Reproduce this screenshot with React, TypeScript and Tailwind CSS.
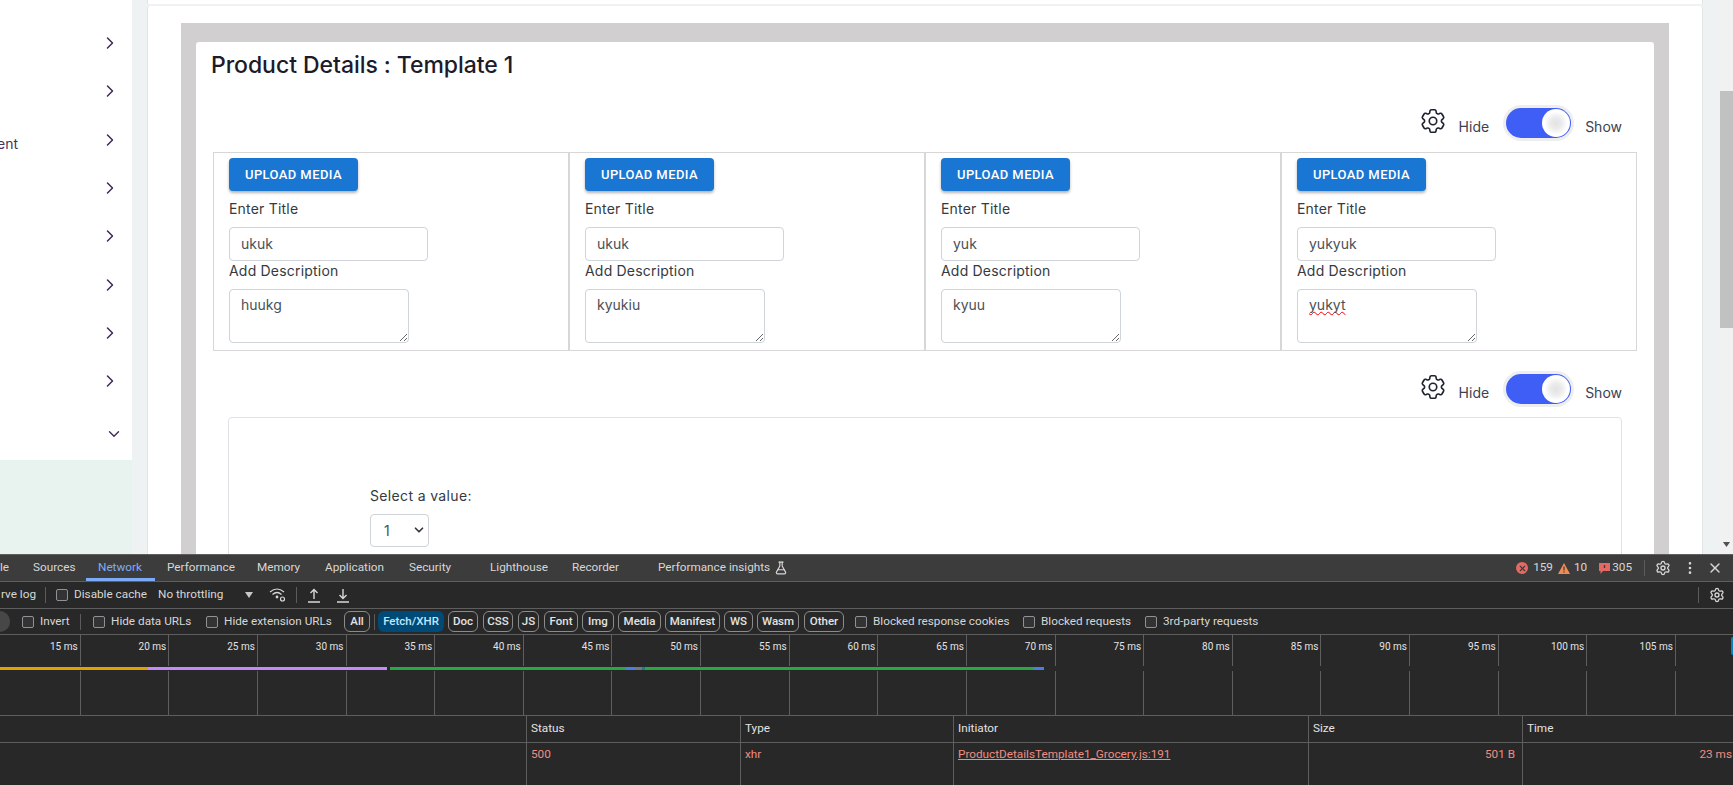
import React from 'react';
import { ChevronRight, ChevronDown, Settings, X, MoreVertical, FlaskConical } from 'lucide-react';
import { HiOutlineCog6Tooth } from 'react-icons/hi2';

const sideRows = ['', '', 'ent', '', '', '', '', ''];

const cards = [
  { title: 'ukuk', desc: 'huukg' },
  { title: 'ukuk', desc: 'kyukiu' },
  { title: 'yuk', desc: 'kyuu' },
  { title: 'yukyuk', desc: 'yukyt', spell: true },
];

const tabs = [
  { label: 'le', cls: 'w-[21px] pr-3 text-right' },
  { label: 'Sources', cls: 'w-[65px] pl-3' },
  { label: 'Network', cls: 'w-[69px] pl-3 text-[#7cacf8] border-b-[3px] border-[#7cacf8] pt-[3px]' },
  { label: 'Performance', cls: 'w-[90px] pl-3' },
  { label: 'Memory', cls: 'w-[68px] pl-3' },
  { label: 'Application', cls: 'w-[84px] pl-3' },
  { label: 'Security', cls: 'w-[81px] pl-3' },
  { label: 'Lighthouse', cls: 'w-[82px] pl-3' },
  { label: 'Recorder', cls: 'w-[86px] pl-3' },
];

const chips = [
  { label: 'Doc', cls: 'w-[30px] ml-[4px]' },
  { label: 'CSS', cls: 'w-[30px] ml-[5px]' },
  { label: 'JS', cls: 'w-[21px] ml-[5px]' },
  { label: 'Font', cls: 'w-[34px] ml-[5px]' },
  { label: 'Img', cls: 'w-[32px] ml-[4px]' },
  { label: 'Media', cls: 'w-[43px] ml-[4px]' },
  { label: 'Manifest', cls: 'w-[55px] ml-[4px]' },
  { label: 'WS', cls: 'w-[29px] ml-[4px]' },
  { label: 'Wasm', cls: 'w-[42px] ml-[4px]' },
  { label: 'Other', cls: 'w-[40px] ml-[5px]' },
];

const ticks = [15, 20, 25, 30, 35, 40, 45, 50, 55, 60, 65, 70, 75, 80, 85, 90, 95, 100, 105];

const segments = [
  { cls: 'w-[148px] bg-[#e0a100]' },
  { cls: 'w-[239px] bg-[#c58af9]' },
  { cls: 'w-[3px] bg-transparent' },
  { cls: 'w-[235px] bg-[#28a745]' },
  { cls: 'w-[10px] bg-[#4a7fe0]' },
  { cls: 'w-[7px] bg-[#777777]' },
  { cls: 'w-[3px] bg-[#14808c]' },
  { cls: 'w-[389px] bg-[#28a745]' },
  { cls: 'w-[10px] bg-[#4a7fe0]' },
];

function Toggle() {
  return (
    <div className="flex items-center justify-end pr-8 h-[30px]">
      <HiOutlineCog6Tooth size={30} strokeWidth={1.3} className="text-[#1f2230] mr-[11px] -mt-[5px]" />
      <span className="text-[14px] text-[#3d4250] mt-[6px]">Hide</span>
      <div className="relative w-[65px] h-[30px] ml-[17px] mr-[14px] rounded-full bg-[#3f5ef6] shadow-[0_0_0_3px_#eeeeee]">
        <div className="absolute right-[1px] top-[1px] w-[28px] h-[28px] rounded-full bg-[radial-gradient(circle,_#e2e2e2_0%,_#ececec_30%,_#ffffff_58%)]" />
      </div>
      <span className="text-[14px] text-[#3d4250] mt-[6px]">Show</span>
    </div>
  );
}

function MediaCard({ title, desc, spell }: { title: string; desc: string; spell?: boolean }) {
  return (
    <div className="border border-[#d8d6d7] pl-[15px] pt-[5px] h-[199px] flex flex-col items-start">
      <button className="w-[129px] h-[33px] rounded bg-[#1976d2] text-white text-[13px] font-medium tracking-[0.4px] uppercase shadow-[0_2px_3px_rgba(0,0,0,0.3)] font-['Roboto',sans-serif]">
        Upload Media
      </button>
      <label className="text-[14px] leading-[20px] tracking-[0.2px] text-[#343a40] mt-[8px]">Enter Title</label>
      <input
        readOnly
        value={title}
        className="w-[199px] h-[34px] mt-[8px] px-[11px] pb-[2px] border border-[#ced4da] rounded text-[14px] text-[#495057] outline-none"
      />
      <label className="text-[14px] leading-[20px] tracking-[0.2px] text-[#343a40]">Add Description</label>
      <textarea
        readOnly
        spellCheck={false}
        value={desc}
        className={`w-[180px] h-[54px] mt-[8px] px-[11px] py-[4px] border border-[#ced4da] rounded text-[14px] leading-[21px] text-[#495057] outline-none ${
          spell ? 'underline decoration-wavy decoration-[#f00] decoration-[1px] [text-decoration-skip-ink:none]' : ''
        }`}
      />
    </div>
  );
}

function Check({ label, cls }: { label: string; cls: string }) {
  return (
    <div className={`flex items-center ${cls}`}>
      <span className="w-3 h-3 rounded-[2px] border border-[#8e9196] bg-[#333333] shrink-0" />
      <span className="ml-[6px] whitespace-nowrap">{label}</span>
    </div>
  );
}

function Divider({ cls }: { cls: string }) {
  return <span className={`w-px h-[16px] bg-[#5b5b5b] shrink-0 ${cls}`} />;
}

function DevTools() {
  return (
    <div className="h-[231px] shrink-0 bg-[#282828] text-[#d7d7d7] text-[11.75px] font-['Roboto',sans-serif] overflow-hidden">
      {/* Tabs */}
      <div className="h-[28px] bg-[#3c3c3c] border-y border-[#5e5e5e] flex items-stretch">
        {tabs.map(t => (
          <div key={t.label} className={`flex items-center shrink-0 ${t.cls}`}>
            <span className={t.label === 'le' ? 'w-full' : ''}>{t.label}</span>
          </div>
        ))}
        <div className="flex items-center pl-3 gap-1 w-[200px]">
          <span>Performance insights</span>
          <FlaskConical size={14} />
        </div>
        <div className="flex-1" />
        <div className="flex items-center pr-[10px]">
          <span className="w-[12px] h-[12px] rounded-full bg-[#e46962] flex items-center justify-center">
            <X size={9} strokeWidth={3} className="text-[#3c3c3c]" />
          </span>
          <span className="ml-[5px]">159</span>
          <svg width="12" height="11" viewBox="0 0 12 11" className="ml-[5px]">
            <path d="M6 0 L12 11 L0 11 Z" fill="#f28b54" />
            <rect x="5.4" y="3.5" width="1.2" height="4" fill="#3c3c3c" />
            <rect x="5.4" y="8.4" width="1.2" height="1.2" fill="#3c3c3c" />
          </svg>
          <span className="ml-[4px]">10</span>
          <svg width="11" height="11" viewBox="0 0 11 11" className="ml-[12px]">
            <path d="M0 0 H11 V8 H4 L1.5 11 V8 H0 Z" fill="#e46962" />
            <rect x="4.8" y="2" width="1.4" height="3" fill="#3c3c3c" />
          </svg>
          <span className="ml-[2px]">305</span>
          <Divider cls="ml-[12px]" />
          <Settings size={16} className="ml-[10px]" />
          <MoreVertical size={16} className="ml-[11px]" />
          <X size={16} className="ml-[9px]" />
        </div>
      </div>

      {/* Toolbar */}
      <div className="h-[27px] border-b border-[#5e5e5e] flex items-center">
        <span className="w-[36px] shrink-0 whitespace-nowrap text-right">rve log</span>
        <Divider cls="ml-[9px]" />
        <Check label="Disable cache" cls="ml-[10px] w-[102px] shrink-0" />
        <span className="whitespace-nowrap w-[87px] shrink-0">No throttling</span>
        <svg width="8" height="6" viewBox="0 0 8 6" className="shrink-0">
          <path d="M0 0 H8 L4 6 Z" fill="#c7c7c7" />
        </svg>
        <svg width="18" height="16" viewBox="0 0 18 16" fill="none" stroke="#d7d7d7" strokeWidth="1.2" className="ml-[16px] shrink-0">
          <path d="M1 5 Q8 -1 15 5" />
          <path d="M3.5 7.5 Q8 3.5 12.5 7.5" />
          <circle cx="8" cy="10" r="0.8" fill="#d7d7d7" />
          <circle cx="13.5" cy="12" r="2" />
        </svg>
        <Divider cls="ml-[9px]" />
        <svg width="14" height="15" viewBox="0 0 14 15" fill="none" stroke="#d7d7d7" strokeWidth="1.4" className="ml-[10px] shrink-0">
          <path d="M7 11 V2 M3.5 5 L7 1.5 L10.5 5 M1 14 H13" />
        </svg>
        <svg width="14" height="15" viewBox="0 0 14 15" fill="none" stroke="#d7d7d7" strokeWidth="1.4" className="ml-[15px] shrink-0">
          <path d="M7 1 V10 M3.5 7 L7 10.5 L10.5 7 M1 14 H13" />
        </svg>
        <div className="flex-1" />
        <Divider cls="" />
        <Settings size={16} className="ml-[10px] mr-[8px]" />
      </div>

      {/* Filters */}
      <div className="h-[26px] border-b border-[#5e5e5e] flex items-center">
        <span className="w-[10px] h-[21px] rounded-r-full bg-[#474747] shrink-0" />
        <Check label="Invert" cls="ml-3 w-[58px] shrink-0" />
        <Divider cls="" />
        <Check label="Hide data URLs" cls="ml-3 w-[113px] shrink-0" />
        <Check label="Hide extension URLs" cls="w-[138px] shrink-0" />
        <span className="w-[26px] h-[21px] rounded-md border border-[#8b8b8b] flex items-center justify-center text-[11.5px] font-medium text-[#e3e3e3] shrink-0">
          All
        </span>
        <Divider cls="ml-[4px]" />
        <span className="w-[66px] h-[21px] ml-[3px] rounded-md bg-[#004a77] flex items-center justify-center text-[11.5px] font-medium text-[#c2e7ff] shrink-0">
          Fetch/XHR
        </span>
        {chips.map(c => (
          <span
            key={c.label}
            className={`h-[21px] rounded-md border border-[#8b8b8b] flex items-center justify-center text-[11.5px] font-medium text-[#e3e3e3] shrink-0 ${c.cls}`}
          >
            {c.label}
          </span>
        ))}
        <Check label="Blocked response cookies" cls="ml-[11px] w-[168px] shrink-0" />
        <Check label="Blocked requests" cls="w-[122px] shrink-0" />
        <Check label="3rd-party requests" cls="shrink-0" />
      </div>

      {/* Overview */}
      <div className="relative h-[81px] border-b border-[#5e5e5e] flex -ml-[8px] text-[10px] text-[#e3e3e3]">
        {ticks.map(n => (
          <div key={n} className="w-[88.63px] shrink-0 border-r border-[#5e5e5e] pr-[2px] pt-[3px] text-right leading-[18px]">
            {n} ms
          </div>
        ))}
        <div className="absolute left-[8px] right-0 top-[31px] h-[5px] bg-[#282828] py-px flex">
          {segments.map((s, i) => (
            <span key={i} className={`h-[3px] shrink-0 ${s.cls}`} />
          ))}
        </div>
        <span className="absolute right-0 top-[2px] w-[2px] h-[18px] rounded-l bg-[#0b7fc4]" />
      </div>

      {/* Request table */}
      <div className="grid grid-cols-[526px_214px_213px_355px_214px_1fr] h-[27px] border-b border-[#5e5e5e] text-[#e3e3e3]">
        {['', 'Status', 'Type', 'Initiator', 'Size', 'Time'].map((h, i) => (
          <div key={i} className={`flex items-center pl-[4px] ${i > 0 ? 'border-l border-[#5e5e5e]' : ''}`}>
            {h}
          </div>
        ))}
      </div>
      <div className="grid grid-cols-[526px_214px_213px_355px_214px_1fr] h-[42px] text-[#ee8e84]">
        <div />
        <div className="border-l border-[#5e5e5e] pl-[4px] pt-[3px]">500</div>
        <div className="border-l border-[#5e5e5e] pl-[4px] pt-[3px]">xhr</div>
        <div className="border-l border-[#5e5e5e] pl-[4px] pt-[3px] underline">ProductDetailsTemplate1_Grocery.js:191</div>
        <div className="border-l border-[#5e5e5e] pr-[7px] pt-[3px] text-right">501 B</div>
        <div className="border-l border-[#5e5e5e] pr-[1px] pt-[3px] text-right">23 ms</div>
      </div>
    </div>
  );
}

export default function App() {
  return (
    <div className="h-screen w-full flex flex-col overflow-hidden bg-white font-['Inter',sans-serif]">
      <div className="flex-1 min-h-0 flex overflow-hidden">
        {/* Sidebar */}
        <aside className="w-[132px] shrink-0 bg-white flex flex-col text-[#47315f]">
          <div className="pt-[19px]">
            {sideRows.map((label, i) => (
              <div key={i} className="h-[48.3px] flex items-center justify-between pr-3">
                <span className="text-[14px] mt-[8px] -ml-[3px]">{label}</span>
                <ChevronRight size={20} strokeWidth={1.8} className="text-[#3d2a57]" />
              </div>
            ))}
          </div>
          <div className="flex justify-end pr-[9px] mt-[20px]">
            <ChevronDown size={18} strokeWidth={1.8} className="text-[#3d2a57]" />
          </div>
          <div className="flex-1 mt-[17px] bg-[#e8f3ef]" />
        </aside>

        {/* Page */}
        <main className="flex-1 min-w-0 bg-[#eef2f3] pl-[15px] pr-[17px]">
          <div className="h-[4px] bg-white border-x border-[#e2e5e6]" />
          <div className="h-[calc(100%-6px)] mt-[2px] bg-white border-x border-[#e2e5e6] rounded-t-[3px] px-[33px] pt-[17px] overflow-hidden">
            <div className="bg-[#d1cfd0] px-[15px] pt-[19px] pb-[15px]">
              <div className="bg-white rounded-t-[3px] px-[17px] pb-8">
                <h1 className="text-[23px] leading-[30px] font-medium tracking-[-0.05px] text-[#1b1b2b] pt-[8px] -ml-[2px] [font-feature-settings:'calt'_0]">
                  Product Details : Template 1
                </h1>
                <div className="mt-[28px] -mr-[17px]">
                  <Toggle />
                </div>
                <div className="grid grid-cols-4 mt-[14px]">
                  {cards.map((c, i) => (
                    <MediaCard key={i} title={c.title} desc={c.desc} spell={c.spell} />
                  ))}
                </div>
                <div className="mt-[23px] -mr-[17px]">
                  <Toggle />
                </div>
                <div className="mt-[13px] ml-[15px] mr-[15px] border border-[#dee2e6] rounded h-[300px] pl-[141px] pt-[68px]">
                  <label className="block text-[14px] leading-[20px] tracking-[0.35px] text-[#343a40]">Select a value:</label>
                  <div className="relative w-[59px] mt-[8px]">
                    <select className="appearance-none w-[59px] h-[33px] pl-[13px] border border-[#ced4da] rounded text-[14px] text-[#495057] bg-white outline-none">
                      <option>1</option>
                    </select>
                    <ChevronDown size={14} strokeWidth={3} className="absolute right-[3px] top-[9px] text-[#343a40] pointer-events-none" />
                  </div>
                </div>
              </div>
            </div>
          </div>
        </main>

        {/* Scrollbar */}
        <div className="w-[13px] shrink-0 bg-[#f1f1f1] flex flex-col justify-between">
          <div className="h-[91px]" />
          <div className="h-[237px] bg-[#c1c1c1]" />
          <div className="flex-1" />
          <svg width="13" height="13" viewBox="0 0 13 13" className="mb-[3px]">
            <path d="M3 4 H10 L6.5 9 Z" fill="#505050" />
          </svg>
        </div>
      </div>

      <DevTools />
    </div>
  );
}
